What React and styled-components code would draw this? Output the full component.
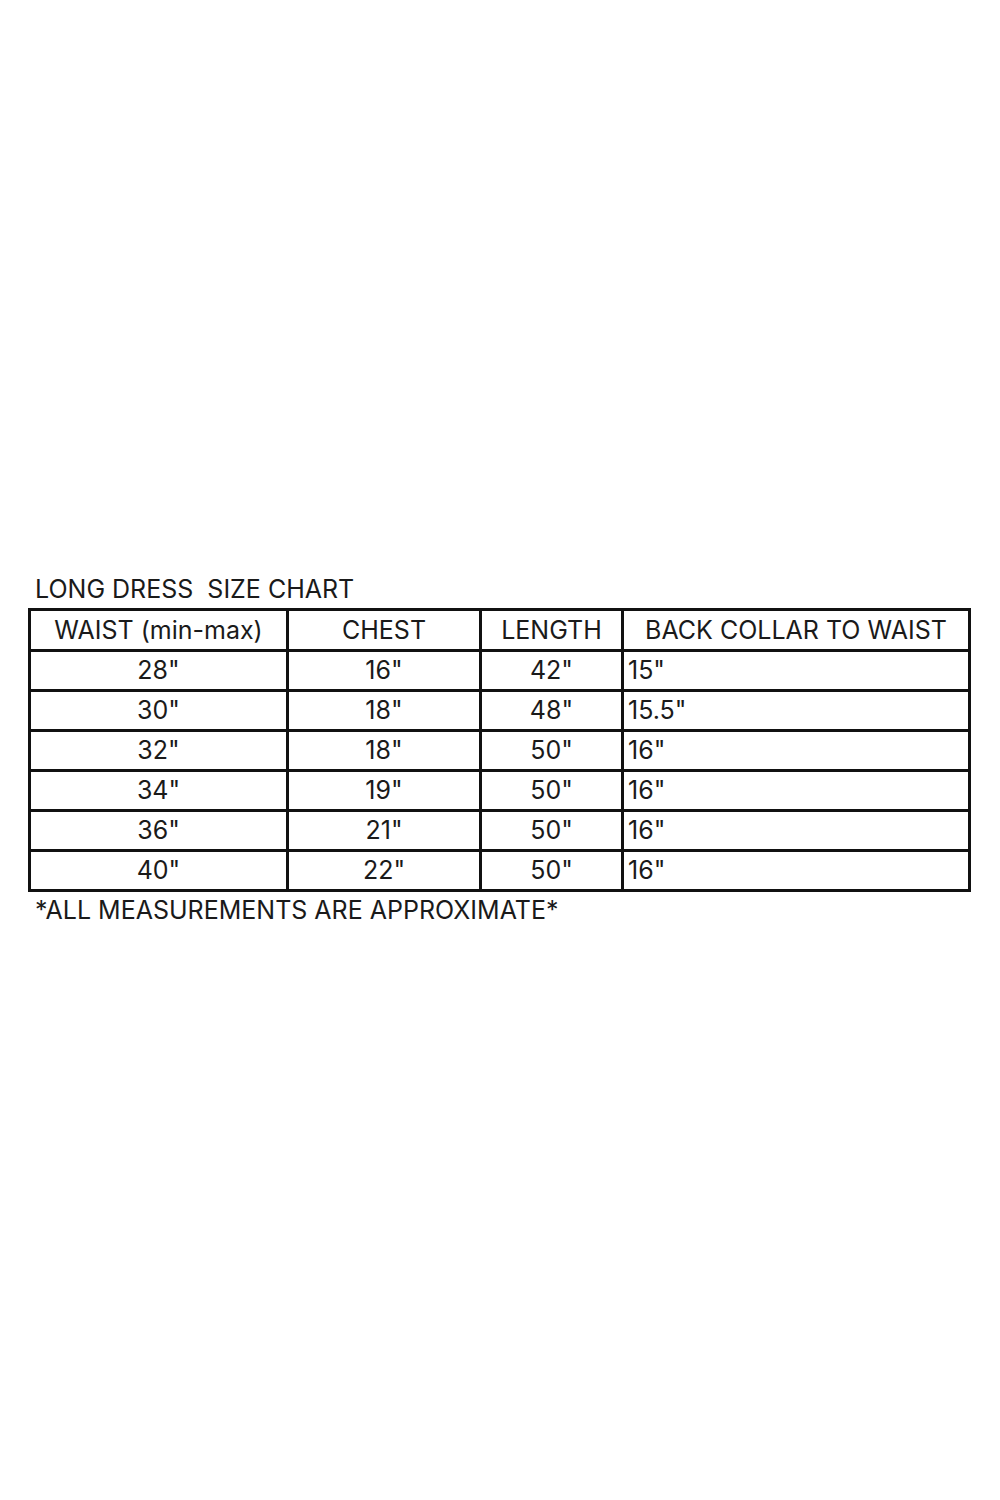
import React from "react";
import styled, { createGlobalStyle } from "styled-components";

const Global = createGlobalStyle`
  html, body { margin: 0; padding: 0; background: #fff; }
  body { font-family: Inter, Lato, "Liberation Sans", sans-serif; color: #1a1a1a; }
`;

const Page = styled.div`
  width: 1000px;
  height: 1500px;
  box-sizing: border-box;
  padding: 573px 0 0 28px;
`;

const Title = styled.div`
  font-size: 25px;
  line-height: 32px;
  padding-left: 7px;
  height: 35px;
`;

const Grid = styled.div`
  display: grid;
  grid-template-columns: 255px 190px 139px 344px;
  grid-template-rows: 38px repeat(6, 37px);
  gap: 3px;
  border: 3px solid #111;
  background: #111;
  width: 937px;
`;

const Cell = styled.div`
  background: #fff;
  display: flex;
  align-items: center;
  justify-content: ${(p) => (p.$left ? "flex-start" : "center")};
  padding-left: ${(p) => (p.$left ? "4px" : "0")};
  font-size: 25px;
  line-height: 1;
  white-space: nowrap;
`;

const Note = styled.div`
  font-size: 25px;
  line-height: 32px;
  padding-left: 7px;
  margin-top: 2px;
`;

const headers = ["WAIST (min-max)", "CHEST", "LENGTH", "BACK COLLAR TO WAIST"];
const rows = [
  ['28"', '16"', '42"', '15"'],
  ['30"', '18"', '48"', '15.5"'],
  ['32"', '18"', '50"', '16"'],
  ['34"', '19"', '50"', '16"'],
  ['36"', '21"', '50"', '16"'],
  ['40"', '22"', '50"', '16"'],
];

export default function App() {
  return (
    <Page>
      <Global />
      <Title>LONG DRESS&nbsp; SIZE CHART</Title>
      <Grid>
        {headers.map((h) => (
          <Cell key={h}>{h}</Cell>
        ))}
        {rows.map((r, i) =>
          r.map((v, j) => (
            <Cell key={`${i}-${j}`} $left={j === 3}>
              {v}
            </Cell>
          ))
        )}
      </Grid>
      <Note>*ALL MEASUREMENTS ARE APPROXIMATE*</Note>
    </Page>
  );
}
